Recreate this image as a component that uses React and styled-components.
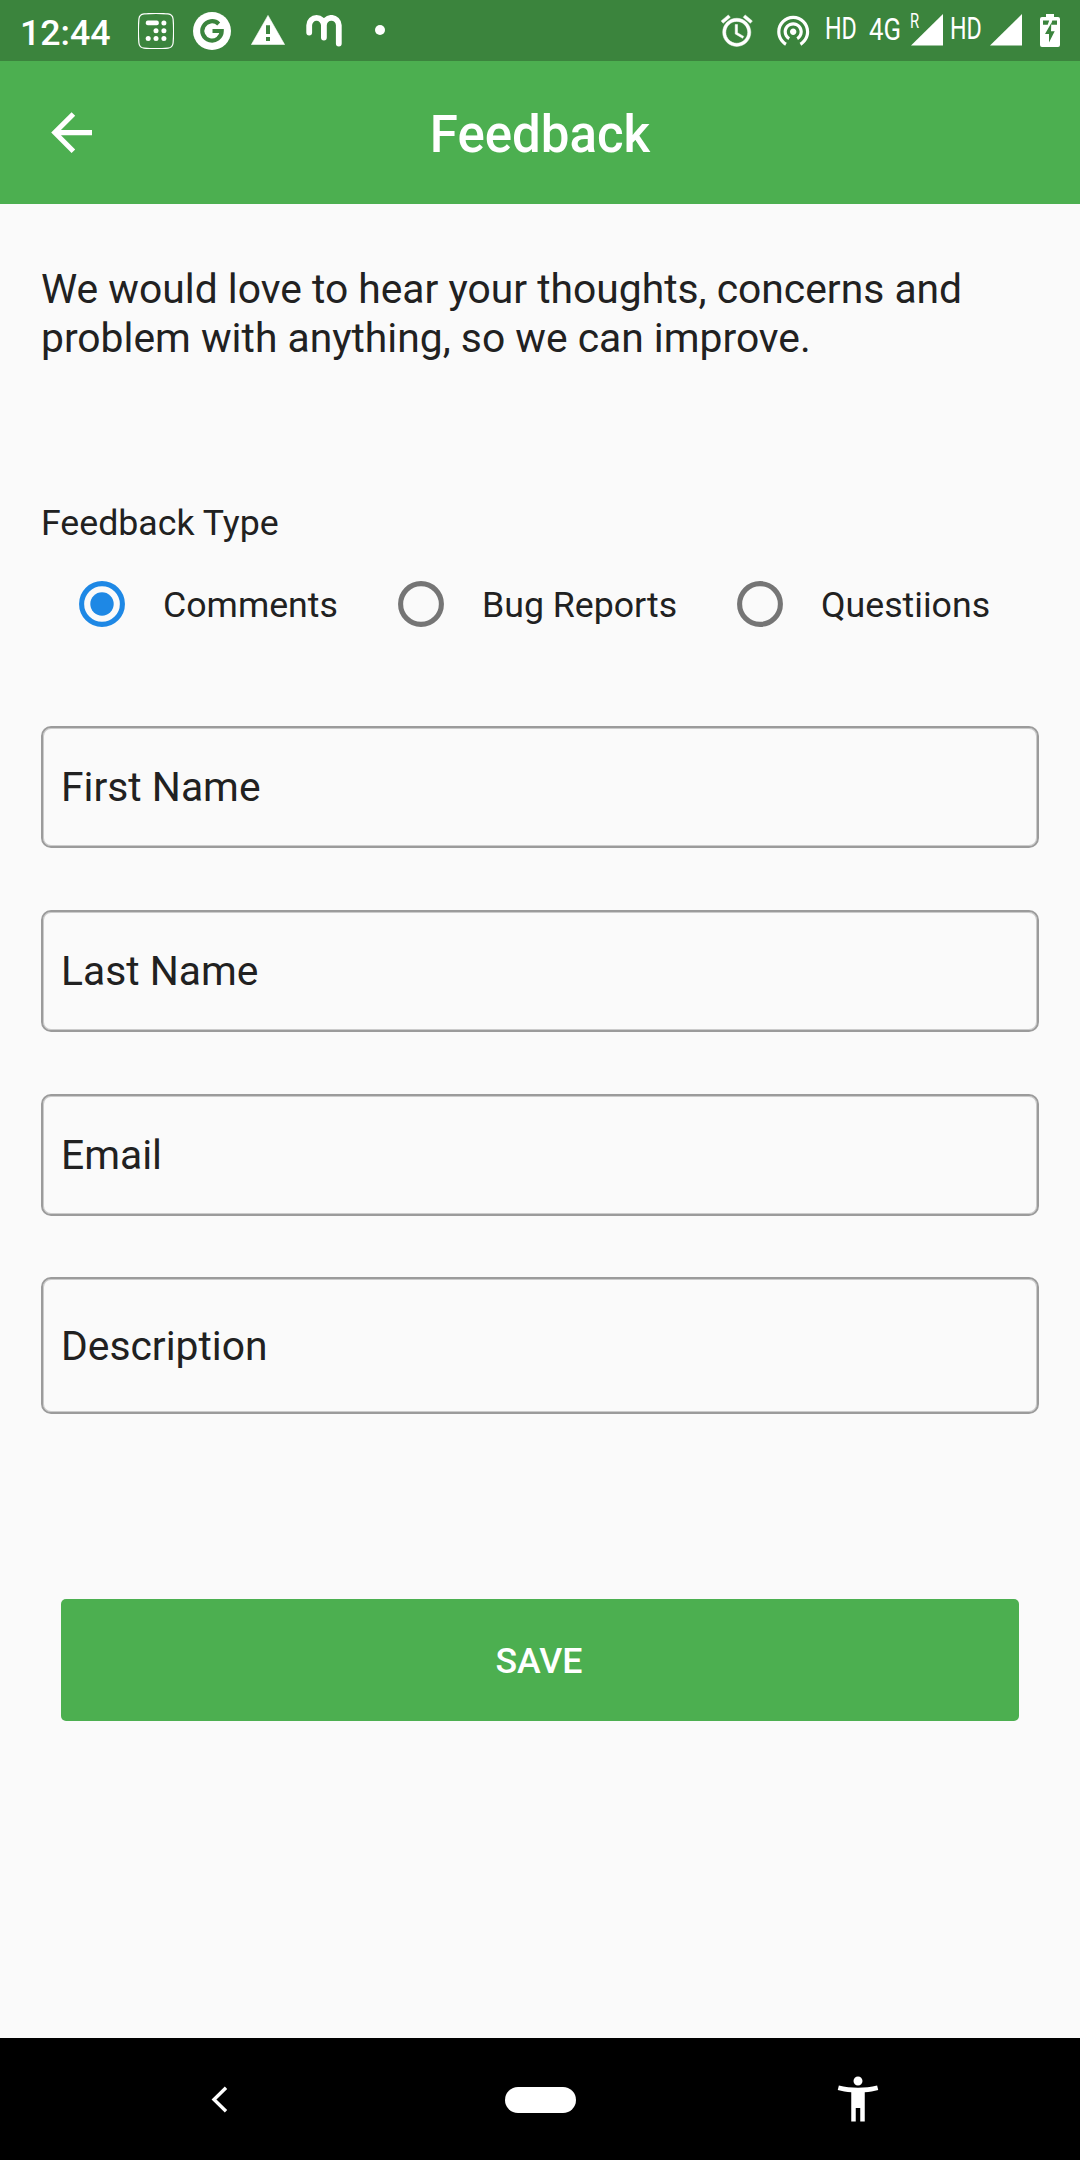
import React, { useState } from "react";
import styled, { createGlobalStyle } from "styled-components";

const GlobalStyle = createGlobalStyle`
  * { box-sizing: border-box; }
  html, body { margin: 0; padding: 0; background: #fafafa; }
`;

const Screen = styled.div`
  width: 1080px;
  height: 2160px;
  display: flex;
  flex-direction: column;
  overflow: hidden;
  background: #fafafa;
  color: #212121;
  font-family: Roboto, "Noto Sans", sans-serif;
`;

const StatusBar = styled.header`
  flex: none;
  height: 61px;
  display: flex;
  align-items: flex-start;
  background: #3b843d;
  color: #fff;
`;

const Clock = styled.time`
  width: 98px;
  margin-left: 20px;
  margin-top: 12px;
  font-size: 35.7px;
  line-height: 42px;
  font-weight: 500;
  white-space: nowrap;
`;

const Glyph = styled.svg`
  flex: none;
  display: block;
  width: ${(p) => p.$w}px;
  height: ${(p) => p.$h}px;
  margin-left: ${(p) => p.$left || 0}px;
  margin-right: ${(p) => p.$right || 0}px;
  margin-top: ${(p) => p.$top || 0}px;
  fill: currentColor;
`;

const Spacer = styled.div`
  flex: 1;
`;

const NetLabel = styled.span`
  flex: none;
  width: ${(p) => p.$w}px;
  margin-left: ${(p) => p.$left}px;
  margin-top: ${(p) => p.$top}px;
  font-size: ${(p) => p.$size}px;
  line-height: 36px;
  white-space: nowrap;
  transform: scaleX(${(p) => p.$squeeze});
  transform-origin: left center;
`;

const AppBar = styled.nav`
  flex: none;
  height: 143px;
  display: grid;
  grid-template-columns: 143px 1fr 143px;
  align-items: center;
  background: #4caf50;
  color: #fff;
`;

const BackButton = styled.button`
  display: flex;
  align-items: center;
  height: 143px;
  padding: 0 0 0 41px;
  border: 0;
  background: none;
  color: inherit;
`;

const Title = styled.h1`
  margin: 4px 0 0;
  text-align: center;
  font-size: 51px;
  line-height: 60px;
  font-weight: 500;
`;

const Form = styled.form`
  flex: 1;
  display: flex;
  flex-direction: column;
  padding: 61px 41px 0;
`;

const Intro = styled.p`
  margin: 0;
  font-size: 40.8px;
  line-height: 49px;
  white-space: nowrap;
`;

const GroupLabel = styled.h2`
  margin: 139px 0 0;
  font-size: 35.7px;
  line-height: 42px;
  font-weight: 400;
`;

const RadioRow = styled.div`
  display: flex;
  align-items: center;
  height: 122px;
  margin-top: -1px;
  padding-left: 35px;
`;

const RadioOption = styled.label`
  display: flex;
  align-items: center;
  width: ${(p) => p.$w}px;
  font-size: 35.7px;
  line-height: 42px;
  white-space: nowrap;
`;

const RadioCircle = styled.span`
  flex: none;
  display: flex;
  align-items: center;
  justify-content: center;
  width: 51px;
  height: 51px;
  margin-right: 36px;
  color: ${(p) => (p.$on ? "#1e88e5" : "#757575")};
`;

const OptionText = styled.span`
  padding-top: 1px;
`;

const Fields = styled.div`
  display: flex;
  flex-direction: column;
  margin-top: 61px;
`;

const Field = styled.div`
  display: flex;
  align-items: center;
  height: ${(p) => p.$h}px;
  margin-bottom: ${(p) => p.$gap}px;
  padding: 0 18px;
  border: 2px solid #9b9b9b;
  border-radius: 10px;
  box-shadow: inset 0 0 0 1px #9b9b9b80;
  font-size: 40.8px;
  line-height: 48px;
`;

const SaveButton = styled.button`
  height: 122px;
  margin: 185px 20px 0;
  padding: 2px 2px 0 0;
  border: 0;
  border-radius: 5px;
  background: #4caf50;
  color: #fff;
  font-family: inherit;
  font-size: 35.7px;
  line-height: 42px;
  font-weight: 500;
`;

const NavBar = styled.footer`
  flex: none;
  height: 122px;
  display: flex;
  align-items: center;
  background: #000;
  color: #fff;
`;

const HomePill = styled.span`
  width: 71px;
  height: 26px;
  margin-left: 277px;
  margin-top: 1px;
  border-radius: 13px;
  background: #fff;
`;

const options = [
  { label: "Comments", width: 319 },
  { label: "Bug Reports", width: 339 },
  { label: "Questiions", width: 270 },
];

const fields = [
  { label: "First Name", h: 122, gap: 62 },
  { label: "Last Name", h: 122, gap: 62 },
  { label: "Email", h: 122, gap: 61 },
  { label: "Description", h: 137, gap: 0 },
];

function Signal({ left }) {
  return (
    <Glyph $w={32} $h={32} $left={left} $top={14} viewBox="0 0 32 32">
      <path d="M32 0V31.6H0z" />
    </Glyph>
  );
}

function Status() {
  return (
    <StatusBar>
      <Clock>12:44</Clock>
      <Glyph $w={36} $h={36} $left={20} $top={13} viewBox="0 0 36 36">
        <path
          d="M6 .9Q18 -.1 30 .9Q34.600 1.300 35.100 6Q36.100 18 35.100 30Q34.600 34.700 30 35.100Q18 36.100 6 35.100Q1.400 34.700 .9 30Q-.1 18 .9 6Q1.400 1.300 6 .9z"
          fill="none"
          stroke="currentColor"
          strokeWidth="1.2"
        />
        <rect x="7.800" y="7.600" width="13" height="4.600" rx="2" />
        <circle cx="25.900" cy="9.900" r="2.500" />
        <circle cx="18" cy="17.700" r="2.500" />
        <circle cx="25.900" cy="17.700" r="2.500" />
        <circle cx="10.200" cy="25.600" r="2.500" />
        <circle cx="18" cy="25.600" r="2.500" />
        <circle cx="25.900" cy="25.600" r="2.500" />
      </Glyph>
      <Glyph $w={38} $h={38} $left={19} $top={12} viewBox="0 0 38 38">
        <circle cx="19" cy="19" r="19" />
        <path
          d="M25.700 11.900A9.700 9.700 0 1 0 28.700 19H19.500"
          fill="none"
          stroke="#3b843d"
          strokeWidth="4.200"
        />
      </Glyph>
      <Glyph $w={34} $h={30} $left={20} $top={15} viewBox="0 0 34 30">
        <path d="M17 .4L33.600 29.600H.4z" stroke="currentColor" strokeWidth=".6" strokeLinejoin="round" />
        <path d="M15 10.300h4v8.700h-4zM15 22h4v4h-4z" fill="#3b843d" />
      </Glyph>
      <Glyph $w={36} $h={32} $left={21} $top={15} viewBox="0 0 36 32">
        <path
          d="M3.200 17.500V10.300A7.350 7.350 0 0 1 17.900 10.300V22.500M17.900 10.300A7.450 7.450 0 0 1 32.800 10.300V28.500"
          fill="none"
          stroke="currentColor"
          strokeWidth="5.800"
          strokeLinecap="round"
        />
      </Glyph>
      <Glyph $w={10} $h={10} $left={33} $top={25} viewBox="0 0 10 10">
        <circle cx="5" cy="5" r="5" />
      </Glyph>
      <Spacer />
      <Glyph $w={37.5} $h={37.5} $top={11.5} viewBox="0 0 24 24">
        <path
          d="M22 5.720l-4.600-3.860-1.290 1.530 4.600 3.860L22 5.720zM7.880 3.390L6.600 1.860 2 5.710l1.290 1.530 4.590-3.850zM12.500 8H11v6l4.750 2.850.75-1.230-4-2.370V8zM12 4c-4.970 0-9 4.030-9 9s4.020 9 9 9c4.970 0 9-4.030 9-9s-4.030-9-9-9zm0 16c-3.870 0-7-3.130-7-7s3.130-7 7-7 7 3.130 7 7-3.130 7-7 7z"
          stroke="currentColor"
          strokeWidth=".3"
        />
      </Glyph>
      <Glyph $w={38.4} $h={38.4} $left={18.5} $top={10.7} viewBox="0 0 24 24">
        <path d="M12 11c-1.100 0-2 .9-2 2s.9 2 2 2 2-.9 2-2-.9-2-2-2zm6 2c0-3.310-2.690-6-6-6s-6 2.690-6 6c0 2.220 1.210 4.150 3 5.190l1-1.740c-1.190-.7-2-1.970-2-3.450 0-2.210 1.790-4 4-4s4 1.790 4 4c0 1.480-.81 2.750-2 3.450l1 1.740c1.790-1.040 3-2.970 3-5.190zM12 3C6.480 3 2 7.480 2 13c0 3.700 2.010 6.920 4.990 8.650l1-1.730C5.610 18.530 4 15.960 4 13c0-4.420 3.580-8 8-8s8 3.580 8 8c0 2.960-1.610 5.530-4 6.920l1 1.730c2.990-1.730 5-4.950 5-8.650 0-5.520-4.480-10-10-10z" />
      </Glyph>
      <NetLabel $w={30} $left={13} $top={11} $size={31} $squeeze={0.75}>HD</NetLabel>
      <NetLabel $w={32} $left={13.4} $top={12} $size={31} $squeeze={0.83}>4G</NetLabel>
      <NetLabel $w={9} $left={9.2} $top={2.5} $size={20} $squeeze={0.74}>R</NetLabel>
      <Signal left={-7.7} />
      <NetLabel $w={30} $left={6.5} $top={11} $size={31} $squeeze={0.75}>HD</NetLabel>
      <Signal left={10.5} />
      <Glyph $w={20} $h={33} $left={18} $right={20} $top={14} viewBox="0 0 20 33">
        <path
          fillRule="evenodd"
          d="M6 0h8v3h4q2 0 2 2v26q0 2-2 2H2q-2 0-2-2V5q0-2 2-2h4zM3 6.500v4.300h4.700l1.500-4.300zM12.300 6.500l-1.300 4.300h6V6.500zM11.300 9L5 20h4v8.600L14.700 17.300H11z"
        />
      </Glyph>
    </StatusBar>
  );
}

export default function App() {
  const [selected, setSelected] = useState("Comments");
  return (
    <Screen>
      <GlobalStyle />
      <Status />
      <AppBar>
        <BackButton aria-label="Back">
          <Glyph $w={61.2} $h={61.2} viewBox="0 0 24 24">
            <path d="M20 11H7.830l5.590-5.590L12 4l-8 8 8 8 1.410-1.410L7.830 13H20v-2z" />
          </Glyph>
        </BackButton>
        <Title>Feedback</Title>
      </AppBar>
      <Form onSubmit={(e) => e.preventDefault()}>
        <Intro>
          We would love to hear your thoughts, concerns and
          <br />
          problem with anything, so we can improve.
        </Intro>
        <GroupLabel>Feedback Type</GroupLabel>
        <RadioRow>
          {options.map((o) => (
            <RadioOption key={o.label} $w={o.width} onClick={() => setSelected(o.label)}>
              <RadioCircle $on={selected === o.label}>
                <Glyph $w={46} $h={46} viewBox="0 0 46 46">
                  <circle cx="23" cy="23" r="20.400" fill="none" stroke="currentColor" strokeWidth="5.100" />
                  {selected === o.label && <circle cx="23" cy="23" r="11.700" />}
                </Glyph>
              </RadioCircle>
              <OptionText>{o.label}</OptionText>
            </RadioOption>
          ))}
        </RadioRow>
        <Fields>
          {fields.map((f) => (
            <Field key={f.label} $h={f.h} $gap={f.gap}>
              {f.label}
            </Field>
          ))}
        </Fields>
        <SaveButton type="submit">SAVE</SaveButton>
      </Form>
      <NavBar>
        <Glyph $w={17} $h={27} $left={211} viewBox="0 0 17 27">
          <path d="M15 1.800L3 13.500L15 25.200" fill="none" stroke="currentColor" strokeWidth="3.400" />
        </Glyph>
        <HomePill />
        <Glyph $w={54} $h={54} $left={255} viewBox="0 0 24 24">
          <path d="M20.500 6c-2.610.7-5.670 1-8.500 1s-5.890-.3-8.500-1L3 8c1.860.5 4 .83 6 1v13h2v-6h2v6h2V9c2-.17 4.140-.5 6-1l-.5-2zM12 6c1.100 0 2-.9 2-2s-.9-2-2-2-2 .9-2 2 .9 2 2 2z" />
        </Glyph>
      </NavBar>
    </Screen>
  );
}
